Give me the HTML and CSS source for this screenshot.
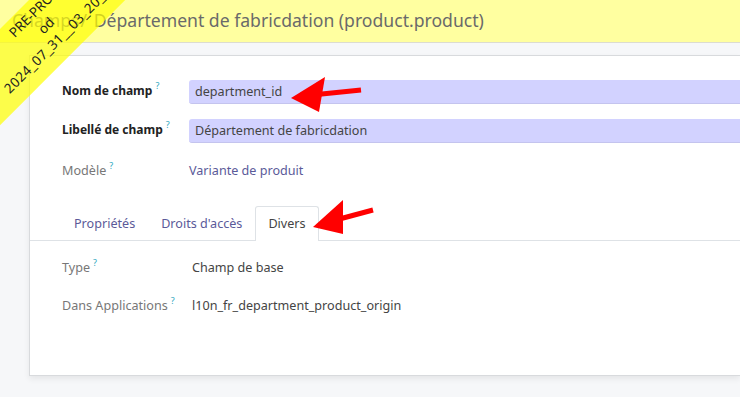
FILE: index.html
```html
<!DOCTYPE html>
<html lang="fr">
<head>
  <meta charset="UTF-8" />
  <title>Champs / Département de fabricdation</title>
  <link rel="stylesheet" href="styles.css">
</head>
<body>
  <div class="titlebar">
    <span class="crumb">Champs</span><span class="sep">/</span> Département de fabricdation (product.product)
  </div>

  <div class="content">
    <div class="card">
      <div class="fields">
        <div class="label strong">Nom de champ<sup>?</sup></div>
        <div class="input">department_id</div>

        <div class="label strong">Libellé de champ<sup>?</sup></div>
        <div class="input">Département de fabricdation</div>

        <div class="label muted">Modèle<sup>?</sup></div>
        <div class="value link">Variante de produit</div>
      </div>

      <div class="tabs">
        <div class="tab">Propriétés</div>
        <div class="tab">Droits d'accès</div>
        <div class="tab active">Divers</div>
      </div>

      <div class="tab-pane">
        <div class="label muted">Type<sup>?</sup></div>
        <div class="value">Champ de base</div>

        <div class="label muted">Dans Applications<sup>?</sup></div>
        <div class="value">l10n_fr_department_product_origin</div>
      </div>
    </div>
  </div>

  <div class="ribbon">
    <div class="ribbon-line l1">PRE-PROD</div>
    <div class="ribbon-line l2">od</div>
    <div class="ribbon-line l3">2024_07_31__03_20_00</div>
  </div>

  <svg class="arrows" width="740" height="397" viewBox="0 0 740 397">
    <line x1="312" y1="95" x2="361" y2="90" stroke="#ff0000" stroke-width="5" />
    <polygon points="291,98 325,77 319,112" fill="#ff0000" />
    <line x1="332" y1="221" x2="373" y2="210" stroke="#ff0000" stroke-width="5" />
    <polygon points="313,227 343,200 343,234" fill="#ff0000" />
  </svg>
</body>
</html>
```

FILE: styles.css
```css
body {
  margin: 0;
  padding: 0;
  background: #f6f7f9;
  font-family: "Noto Sans", sans-serif;
  font-size: 12.6px;
  color: #444;
  overflow: hidden;
  height: 397px;
  position: relative;
}
.titlebar {
  height: 42px;
  line-height: 40px;
  background: #ffffa0;
  border-bottom: 1px solid #dcdcd0;
  padding-left: 12px;
  font-size: 17.6px;
  color: #6a6a6a;
  white-space: nowrap;
}
.crumb {
  color: #777;
}
.sep {
  margin: 0 2px 0 1px;
}
.content {
  padding: 12px 0 0 29px;
}
.card {
  background: white;
  border: 1px solid #d8dadd;
  border-right: none;
  height: 319px;
  box-shadow: 0 3px 6px rgba(0,0,0,0.07);
}
.fields {
  display: grid;
  grid-template-columns: 127px 1fr;
  row-gap: 15px;
  padding: 24px 0 0 32px;
  align-items: center;
}
.label {
  white-space: nowrap;
}
.fields .label {
  margin-top: -4px;
}
.label sup {
  color: #2fa7c0;
  font-size: 9px;
  line-height: 0;
  margin-left: 3px;
  vertical-align: 6px;
  font-weight: normal;
}
.strong {
  font-weight: bold;
  font-size: 12px;
  color: #222;
}
.muted {
  color: #777;
}
.fields .muted {
  margin-top: 0;
  padding-top: 3px;
}
.input {
  background: #d2d2ff;
  border-bottom: 1px solid #c4c4ee;
  border-radius: 3px 0 0 3px;
  height: 23px;
  line-height: 23px;
  padding-left: 6px;
  color: #444;
}
.value {
  color: #444;
}
.link {
  color: #5b5a99;
  padding-top: 4px;
}
.tabs {
  display: flex;
  margin-top: 27px;
  padding-left: 31px;
  border-bottom: 1px solid #dee2e6;
}
.tab {
  padding: 0 12px;
  height: 33px;
  line-height: 33px;
  color: #5b5a99;
  border: 1px solid transparent;
  border-bottom: none;
  margin-bottom: -1px;
  border-radius: 3px 3px 0 0;
}
.tab.active {
  background: white;
  border-color: #dee2e6;
  color: #444;
  height: 34px;
}
.tab-pane {
  display: grid;
  grid-template-columns: 130px 1fr;
  row-gap: 20px;
  padding: 18px 0 0 32px;
  line-height: 18px;
}
.ribbon {
  position: absolute;
  left: -56px;
  top: 85px;
  width: 260px;
  height: 68px;
  background: rgba(255, 255, 0, 0.7);
  transform-origin: 0 0;
  transform: rotate(-45deg);
  font-size: 13.5px;
  color: #222;
  line-height: 18px;
  white-space: nowrap;
}
.ribbon-line {
  position: absolute;
}
.l1 {
  left: 83px;
  top: 3px;
}
.l2 {
  left: 106px;
  top: 21px;
}
.l3 {
  left: 40px;
  top: 39px;
  letter-spacing: 0.4px;
}
.arrows {
  position: absolute;
  left: 0;
  top: 0;
  pointer-events: none;
}
```
